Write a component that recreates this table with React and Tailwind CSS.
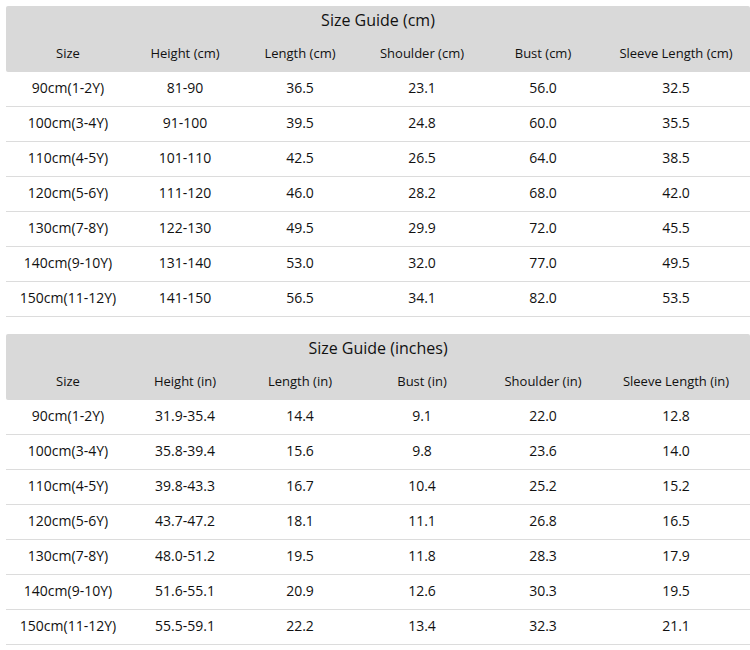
import React from "react";

const cols = "grid grid-cols-[124px_110px_120px_124px_118px_148px]";

const cmHead = ["Size", "Height (cm)", "Length (cm)", "Shoulder (cm)", "Bust (cm)", "Sleeve Length (cm)"];
const cmRows = [
  ["90cm(1-2Y)", "81-90", "36.5", "23.1", "56.0", "32.5"],
  ["100cm(3-4Y)", "91-100", "39.5", "24.8", "60.0", "35.5"],
  ["110cm(4-5Y)", "101-110", "42.5", "26.5", "64.0", "38.5"],
  ["120cm(5-6Y)", "111-120", "46.0", "28.2", "68.0", "42.0"],
  ["130cm(7-8Y)", "122-130", "49.5", "29.9", "72.0", "45.5"],
  ["140cm(9-10Y)", "131-140", "53.0", "32.0", "77.0", "49.5"],
  ["150cm(11-12Y)", "141-150", "56.5", "34.1", "82.0", "53.5"],
];

const inHead = ["Size", "Height (in)", "Length (in)", "Bust (in)", "Shoulder (in)", "Sleeve Length (in)"];
const inRows = [
  ["90cm(1-2Y)", "31.9-35.4", "14.4", "9.1", "22.0", "12.8"],
  ["100cm(3-4Y)", "35.8-39.4", "15.6", "9.8", "23.6", "14.0"],
  ["110cm(4-5Y)", "39.8-43.3", "16.7", "10.4", "25.2", "15.2"],
  ["120cm(5-6Y)", "43.7-47.2", "18.1", "11.1", "26.8", "16.5"],
  ["130cm(7-8Y)", "48.0-51.2", "19.5", "11.8", "28.3", "17.9"],
  ["140cm(9-10Y)", "51.6-55.1", "20.9", "12.6", "30.3", "19.5"],
  ["150cm(11-12Y)", "55.5-59.1", "22.2", "13.4", "32.3", "21.1"],
];

function Table({ title, head, rows }) {
  return (
    <div className="w-[744px]">
      <div className="bg-[#d9d9d9] rounded-t-[2px] rounded-bl-[2px]">
        <div className="h-[30px] flex items-start justify-center text-[16px] leading-[22px] pt-[3px]">{title}</div>
        <div className={`${cols} h-[36px] items-center text-[13px]`}>
          {head.map((h) => (
            <div key={h} className="text-center">{h}</div>
          ))}
        </div>
      </div>
      {rows.map((r, i) => (
        <div key={i} className={`${cols} h-[35px] items-center pb-[3px] border-b border-[#dcdcdc] text-[14px]`}>
          {r.map((c, j) => (
            <div key={j} className="text-center">{c}</div>
          ))}
        </div>
      ))}
    </div>
  );
}

export default function App() {
  return (
    <div className="bg-white w-[750px] h-[650px] overflow-hidden pl-[6px] pt-[6px] text-[#111] font-['Open_Sans','Noto_Sans',sans-serif]">
      <Table title="Size Guide (cm)" head={cmHead} rows={cmRows} />
      <div className="h-[17px]" />
      <Table title="Size Guide (inches)" head={inHead} rows={inRows} />
    </div>
  );
}
